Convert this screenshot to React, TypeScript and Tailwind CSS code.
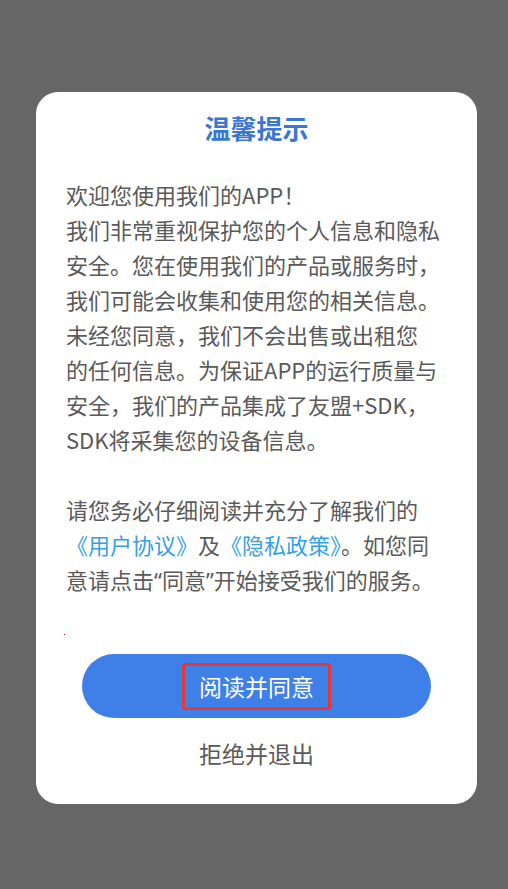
import React from "react";

const font = { fontFamily: '"Noto Sans CJK SC", "Noto Sans", sans-serif' };
const latin = { fontFamily: '"Noto Sans", "Noto Sans CJK SC", sans-serif' };

export default function App() {
  const lines1 = [
    "欢迎您使用我们的APP！",
    "我们非常重视保护您的个人信息和隐私",
    "安全。您在使用我们的产品或服务时，",
    "我们可能会收集和使用您的相关信息。",
    "未经您同意，我们不会出售或出租您",
    "的任何信息。为保证APP的运行质量与",
    "安全，我们的产品集成了友盟+SDK，",
    "SDK将采集您的设备信息。",
  ];
  return (
    <div
      className="w-[508px] h-[889px] bg-[#666666] overflow-hidden pt-[92px] pl-[36px]"
      style={font}
    >
      <div className="w-[441px] h-[712px] bg-white rounded-[22px] flex flex-col">
        <div className="pt-[18px] h-[54px] text-center text-[26px] leading-[36px] font-bold text-[#3b77d0]">
          温馨提示
        </div>
        <div className="mt-[31px] pl-[30px] text-[22px] leading-[35px] text-[#5a5a5a] whitespace-nowrap">
          {lines1.map((l, i) => (
            <div key={i}>{l}</div>
          ))}
          <div className="h-[35px]" />
          <div>请您务必仔细阅读并充分了解我们的</div>
          <div>
            <span className="text-[#35a0e6]">《用户协议》</span>及
            <span className="text-[#35a0e6]">《隐私政策》</span>。如您同
          </div>
          <div>
            意请点击<span style={latin}>“</span>同意<span style={latin}>”</span>开始接受我们的服务。
          </div>
        </div>
        <div className="mt-[36px] ml-[28px] w-px h-px bg-[#b01010]" />
        <div className="mt-[19px] mx-auto w-[349px] h-[64px] rounded-full bg-[#3e80e8] flex items-center justify-center">
          <div className="w-[149px] h-[47px] border-[3px] border-[#e53935] rounded-[3px] flex items-center justify-center text-white text-[23px] leading-none">
            阅读并同意
          </div>
        </div>
        <div className="mt-[18px] text-center text-[23px] leading-[35px] text-[#5a5a5a]">
          拒绝并退出
        </div>
      </div>
    </div>
  );
}
